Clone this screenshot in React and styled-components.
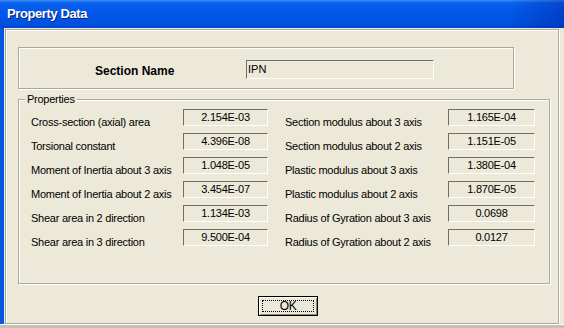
import React from 'react'
import styled, { createGlobalStyle } from 'styled-components'

const GlobalStyle = createGlobalStyle`
  html, body {
    margin: 0;
    padding: 0;
    background: #ece9d8;
  }
  * {
    box-sizing: border-box;
  }
`

const Window = styled.div`
  width: 564px;
  height: 328px;
  display: flex;
  flex-direction: column;
  overflow: hidden;
  background: #ece9d8;
  font-family: 'Liberation Sans', Arial, sans-serif;
  color: #000;
`

const TitleBar = styled.div`
  height: 28px;
  flex: none;
  display: flex;
  align-items: center;
  padding: 0 0 2px 7px;
  background:
    linear-gradient(to right, rgba(0, 0, 0, 0) 90%, rgba(0, 20, 140, 0.35) 100%),
    linear-gradient(to bottom, #3b8cf7 0%, #0a62ee 10%, #0058e8 45%, #0053e1 80%, #0047d3 100%);
`

const Title = styled.span`
  color: #fff;
  font-size: 13px;
  font-weight: bold;
  letter-spacing: -0.4px;
  text-shadow: 1px 1px 0 #0a1e7a;
`

const Body = styled.div`
  flex: none;
  height: 296px;
  display: flex;
  align-items: flex-start;
  border-left: 4px solid #0856e0;
  padding: 1px 0 0 1px;
`

const BottomEdge = styled.div`
  flex: 1;
  background: #c4c2b8;
  border-top: 1px solid #fff;
`

const Panel = styled.div`
  width: 554px;
  height: 295px;
  display: flex;
  flex-direction: column;
  align-items: flex-start;
  border: 1px solid #aca899;
  box-shadow: inset 1px 1px 0 #fff, 1px 1px 0 #fff;
  padding: 17px 0 0 12px;
`

const SectionGroup = styled.div`
  width: 496px;
  height: 42px;
  display: flex;
  align-items: flex-start;
  padding: 12px 0 0 76px;
  border: 1px solid #aca899;
  box-shadow: inset 1px 1px 0 #fff, 1px 1px 0 #fff;
`

const SectionLabel = styled.span`
  width: 151px;
  margin-top: 3px;
  font-size: 12px;
  font-weight: bold;
  line-height: 17px;
`

const NameInput = styled.div`
  width: 188px;
  height: 19px;
  padding: 1px 0 0 1px;
  font-size: 11px;
  line-height: 14px;
  border-top: 1px solid #716f64;
  border-left: 1px solid #716f64;
  border-bottom: 1px solid #fff;
  border-right: 1px solid #fff;
`

const PropsGroup = styled.fieldset`
  width: 532px;
  height: 191px;
  margin: 4px 0 0 0;
  padding: 3px 0 0 12px;
  border: 1px solid #aca899;
  box-shadow: inset 1px 1px 0 #fff, 1px 1px 0 #fff;
`

const Legend = styled.legend`
  padding: 0 2px;
  margin-left: -6px;
  font-size: 11px;
  line-height: 13px;
  letter-spacing: -0.25px;
  background: #ece9d8;
`

const Grid = styled.div`
  display: grid;
  grid-template-columns: 152px 85px 17px 163px 87px;
  grid-auto-rows: 24px;
`

const Label = styled.span`
  padding-top: 5px;
  font-size: 11px;
  line-height: 17px;
  letter-spacing: -0.25px;
  white-space: nowrap;
  grid-column: ${(p) => (p.$right ? 4 : 1)};
`

const Value = styled.div`
  height: 17px;
  font-size: 11px;
  line-height: 14px;
  letter-spacing: -0.25px;
  text-align: center;
  border-top: 1px solid #716f64;
  border-left: 1px solid #716f64;
  border-bottom: 1px solid #fff;
  border-right: 1px solid #fff;
  grid-column: ${(p) => (p.$right ? 5 : 2)};
`

const Footer = styled.div`
  align-self: stretch;
  display: flex;
  justify-content: center;
  padding: 12px 0 0 0;
`

const OkButton = styled.button`
  width: 60px;
  height: 20px;
  padding: 3px;
  margin: 0;
  background: #ece9d8;
  border: 1px solid #000;
  box-shadow: inset 1px 1px 0 #fff, inset -1px -1px 0 #8d8a7c;
  font-family: 'Liberation Sans', Arial, sans-serif;
  display: flex;
`

const Focus = styled.span`
  flex: 1;
  border: 1px dotted #000;
  font-size: 12px;
  line-height: 10px;
  letter-spacing: -0.5px;
  color: #000;
  text-align: center;
`

const rows = [
  ['Cross-section (axial) area', '2.154E-03', 'Section modulus about 3 axis', '1.165E-04'],
  ['Torsional constant', '4.396E-08', 'Section modulus about 2 axis', '1.151E-05'],
  ['Moment of Inertia about 3 axis', '1.048E-05', 'Plastic modulus about 3 axis', '1.380E-04'],
  ['Moment of Inertia about 2 axis', '3.454E-07', 'Plastic modulus about 2 axis', '1.870E-05'],
  ['Shear area in 2 direction', '1.134E-03', 'Radius of Gyration about 3 axis', '0.0698'],
  ['Shear area in 3 direction', '9.500E-04', 'Radius of Gyration about 2 axis', '0.0127'],
]

const App = () => {
  return (
    <Window>
      <GlobalStyle />
      <TitleBar>
        <Title>Property Data</Title>
      </TitleBar>
      <Body>
        <Panel>
          <SectionGroup>
            <SectionLabel>Section Name</SectionLabel>
            <NameInput>IPN</NameInput>
          </SectionGroup>
          <PropsGroup>
            <Legend>Properties</Legend>
            <Grid>
              {rows.map(([l1, v1, l2, v2]) => (
                <React.Fragment key={l1}>
                  <Label>{l1}</Label>
                  <Value>{v1}</Value>
                  <Label $right>{l2}</Label>
                  <Value $right>{v2}</Value>
                </React.Fragment>
              ))}
            </Grid>
          </PropsGroup>
          <Footer>
            <OkButton type='button'>
              <Focus>OK</Focus>
            </OkButton>
          </Footer>
        </Panel>
      </Body>
      <BottomEdge />
    </Window>
  )
}

export default App
